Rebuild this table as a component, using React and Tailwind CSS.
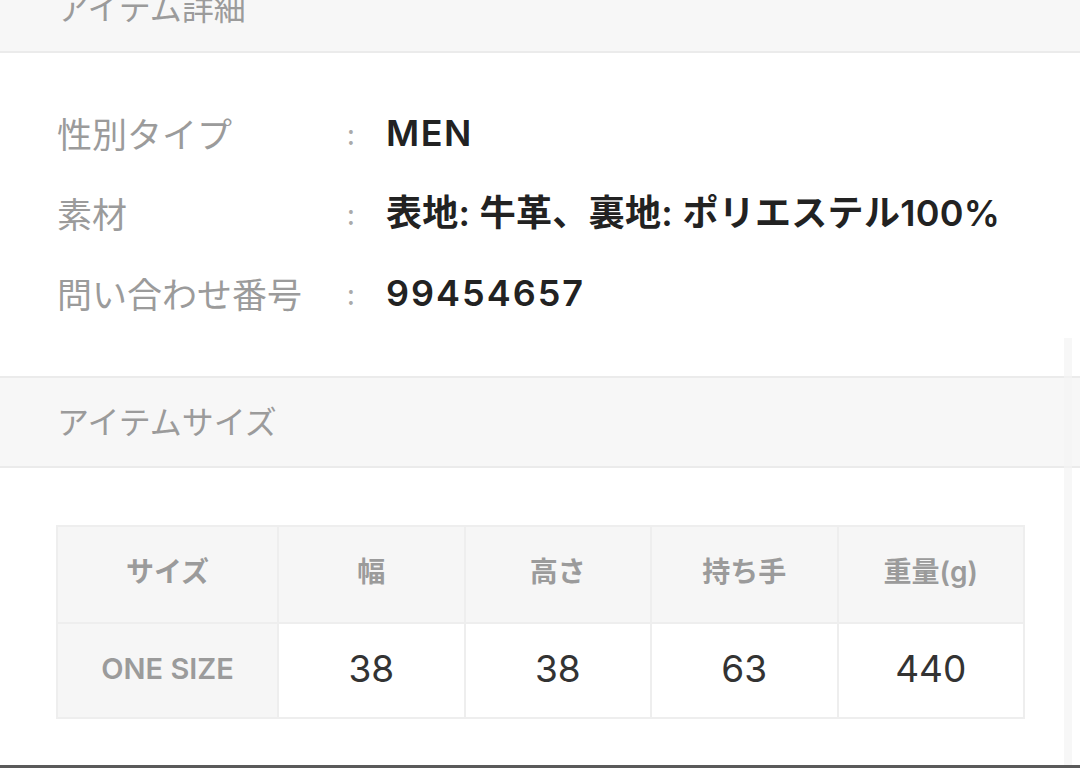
import React from "react";

const jp = { fontFamily: '"Noto Sans CJK JP", sans-serif' };
const latin = { fontFamily: 'Inter, "Noto Sans CJK JP", sans-serif' };

const rows = [
  ["性別タイプ", "MEN", "tracking-[1.5px]"],
  ["素材", "表地: 牛革、裏地: ポリエステル100%", "tracking-[0.3px]"],
  ["問い合わせ番号", "99454657", "tracking-[2px]"],
];

const heads = ["サイズ", "幅", "高さ", "持ち手", "重量(g)"];
const vals = ["38", "38", "63", "440"];

export default function App() {
  return (
    <div className="relative flex h-[768px] w-[1080px] flex-col overflow-hidden bg-white" style={jp}>
      <div className="-mt-[35px] flex h-[88px] shrink-0 items-center border-b-2 border-[#ebebeb] bg-[#f7f7f7] px-[57px] pb-[5px] text-[32px] text-[#9b9b9b]">
        アイテム詳細
      </div>

      <div className="flex flex-col px-[57px] pb-[43px] pt-[40px]">
        {rows.map(([k, v, t]) => (
          <div key={k} className="flex h-[80px] items-center">
            <div className="w-[290px] text-[35px] text-[#9b9b9b]">{k}</div>
            <div className="w-[39px] text-[28px] text-[#aaaaaa]">:</div>
            <div className={`text-[36px] font-semibold text-[#222222] ${t}`} style={latin}>
              {v}
            </div>
          </div>
        ))}
      </div>

      <div className="flex h-[92px] shrink-0 items-center border-y-2 border-[#ebebeb] bg-[#f7f7f7] px-[57px] pb-[5px] text-[32px] text-[#9b9b9b]">
        アイテムサイズ
      </div>

      <div className="px-[56px] pt-[57px]">
        <div className="grid w-[969px] grid-cols-[219px_1fr_1fr_1fr_1fr] gap-[2px] bg-[#eeeeee] p-[2px]">
          {heads.map((h) => (
            <div
              key={h}
              className="flex h-[95px] items-center justify-center bg-[#f6f6f6] pb-[5px] text-[28px] font-semibold text-[#9b9b9b]"
              style={latin}
            >
              {h}
            </div>
          ))}
          <div
            className="flex h-[93px] items-center justify-center bg-[#f6f6f6] pb-[3px] text-[29px] font-semibold text-[#9b9b9b]"
            style={latin}
          >
            ONE SIZE
          </div>
          {vals.map((v, i) => (
            <div
              key={i}
              className="flex h-[93px] items-center justify-center bg-white pb-[3px] text-[37px] text-[#333333]"
              style={latin}
            >
              {v}
            </div>
          ))}
        </div>
      </div>

      <div className="mt-auto h-[3px] w-full bg-[#5a5a5a]" />
      <div className="absolute bottom-[3px] right-[8px] top-[338px] w-[8px] bg-[#f3f3f3]/70" />
    </div>
  );
}
